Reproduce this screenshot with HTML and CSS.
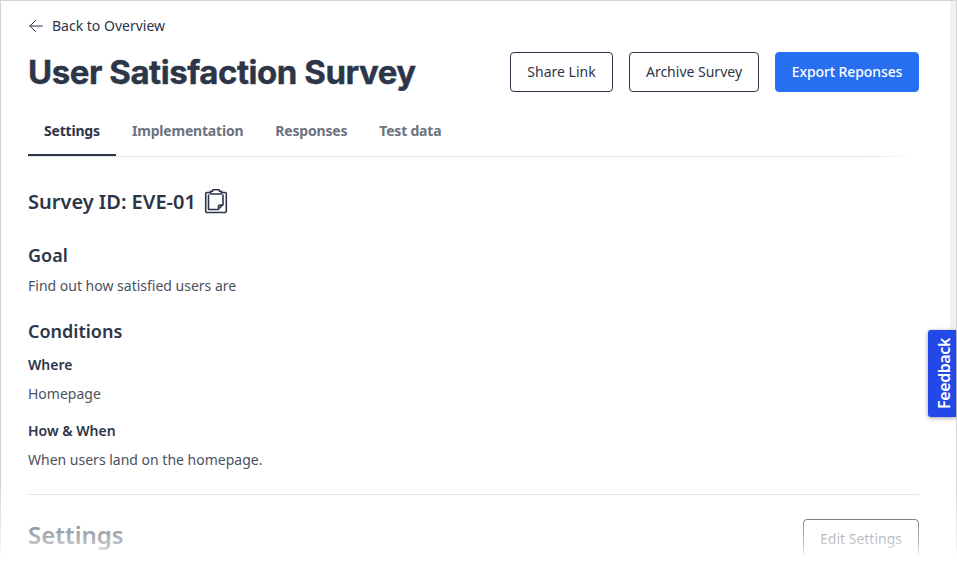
FILE: index.html
```html
<!DOCTYPE html>
<html lang="en">
<head>
<meta charset="utf-8">
<title>User Satisfaction Survey</title>
<link rel="stylesheet" href="styles.css">
</head>
<body>
<div class="frame">
  <main class="page">
    <a class="back"><svg width="14" height="14" viewBox="0 0 14 14"><path d="M13.500 7H.8M6.500 1.500.8 7l5.700 5.500"/></svg><span>Back to Overview</span></a>
    <header class="header">
      <h1>User Satisfaction Survey</h1>
      <div class="actions">
        <button class="btn share">Share Link</button>
        <button class="btn archive">Archive Survey</button>
        <button class="btn primary">Export Reponses</button>
      </div>
    </header>
    <nav class="tabs">
      <a class="tab active">Settings</a>
      <a class="tab">Implementation</a>
      <a class="tab">Responses</a>
      <a class="tab">Test data</a>
    </nav>
    <h2 class="survey-id"><span>Survey ID: EVE-01</span>
      <svg width="24" height="26" viewBox="0 0 24 26"><path d="M6.500 3.500H3A1.300 1.300 0 0 0 1.700 4.800v17.400A1.300 1.300 0 0 0 3 23.500h18a1.300 1.300 0 0 0 1.300-1.300V4.800A1.300 1.300 0 0 0 21 3.500h-3.500"/><path d="M6.500 5V2.300h2L9 .8h6l.5 1.500h2V5z"/><path d="M4.500 6v14.500H14l5-5V6M14.500 20.500v-3q0-1.500 1.500-1.500h3"/></svg>
    </h2>
    <section class="goal">
      <h3>Goal</h3>
      <p>Find out how satisfied users are</p>
    </section>
    <section class="conditions">
      <h3>Conditions</h3>
      <h4>Where</h4>
      <p>Homepage</p>
      <h4>How &amp; When</h4>
      <p>When users land on the homepage.</p>
    </section>
    <section class="settings">
      <h2>Settings</h2>
      <button class="btn edit">Edit Settings</button>
    </section>
  </main>
  <div class="scroll"></div>
  <div class="fade"></div>
  <button class="feedback"><span>Feedback</span></button>
</div>
</body>
</html>
```
FILE: styles.css
```css
* { box-sizing: border-box; }
body { margin: 0; overflow: hidden; background: #fff; font-family: "Noto Sans", sans-serif; color: #2d3548; }
h1, h2, h3, h4, p { margin: 0; }
.frame { position: relative; width: 957px; height: 563px; border: 1px solid #d4d4d4; border-bottom: 0; }
.page { padding: 15px 37px 0 27px; }
svg { fill: none; stroke: #2d3548; stroke-linecap: round; stroke-linejoin: round; flex: none; }
.back { display: flex; align-items: center; gap: 9px; height: 20px; padding-left: 1px; font-size: 14px; line-height: 20px; }
.header { display: flex; justify-content: space-between; margin-top: 16px; height: 40px; }
h1 { font: 700 33px/40px Inter, sans-serif; letter-spacing: -0.46px; white-space: nowrap; -webkit-text-stroke: 0.4px #2d3548; }
.actions { display: flex; gap: 16px; }
.btn { height: 40px; padding: 0; border: 1px solid #2d3548; border-radius: 4px; background: #fff; color: #2d3548; font: 400 14px/20px "Noto Sans", sans-serif; white-space: nowrap; }
.share { width: 103px; }
.archive { width: 130px; }
.primary { width: 144px; border-color: #276ef1; background: #276ef1; color: #fff; font-weight: 500; letter-spacing: -0.1px; }
.tabs { display: flex; height: 65px; padding-top: 14px; background: linear-gradient(90deg, #e3e3e5 94%, transparent 99.3%) bottom / 100% 1px no-repeat; }
.tab { padding: 15px 16px 0; font-size: 14px; line-height: 20px; font-weight: 700; letter-spacing: -0.2px; color: #6b7280; height: 50px; }
.active { width: 88px; color: #2d3548; border-bottom: 2px solid #2d3548; }
.survey-id { display: flex; align-items: center; gap: 8px; height: 30px; margin-top: 30px; font-size: 20px; line-height: 30px; font-weight: 600; }
.survey-id svg { stroke-width: 1.6; }
h3 { font-size: 18px; line-height: 26px; font-weight: 600; }
h4 { font-size: 14px; line-height: 20px; font-weight: 600; }
p { font-size: 14px; line-height: 20px; color: #4b5160; }
.goal { margin-top: 25px; }
.goal p { margin-top: 8px; }
.conditions { margin-top: 22px; height: 177px; border-bottom: 1px solid #e3e3e5; }
.conditions h4 { margin-top: 11px; }
.conditions p { margin-top: 9px; }
.conditions p + h4 { margin-top: 17px; }
.settings { display: flex; justify-content: space-between; padding-top: 24px; }
.settings h2 { font-size: 24px; line-height: 32px; font-weight: 600; }
.edit { width: 116px; color: #4b5160; }
.scroll { position: absolute; top: 0; right: 0; width: 6px; height: 430px; background: linear-gradient(#f1f1f1 75%, #fff); }
.fade { position: absolute; left: -1px; right: -1px; top: 483px; height: 80px; background: linear-gradient(rgba(255,255,255,0), rgba(255,255,255,.38) 44%, rgba(255,255,255,.72) 78%, #fff 91%); }
.feedback { position: absolute; right: 0; top: 329.4px; width: 28px; height: 87px; padding: 0; border: 0; border-radius: 3px 0 0 3px; background: #2348e8; color: #fff; box-shadow: 0 1px 4px rgba(0,0,0,.4); font: 600 16px/28px "Noto Sans", sans-serif; letter-spacing: -0.4px; }
.feedback span { display: block; writing-mode: vertical-rl; transform: translateX(2px) rotate(180deg); width: 28px; height: 87px; text-align: center; }
```
